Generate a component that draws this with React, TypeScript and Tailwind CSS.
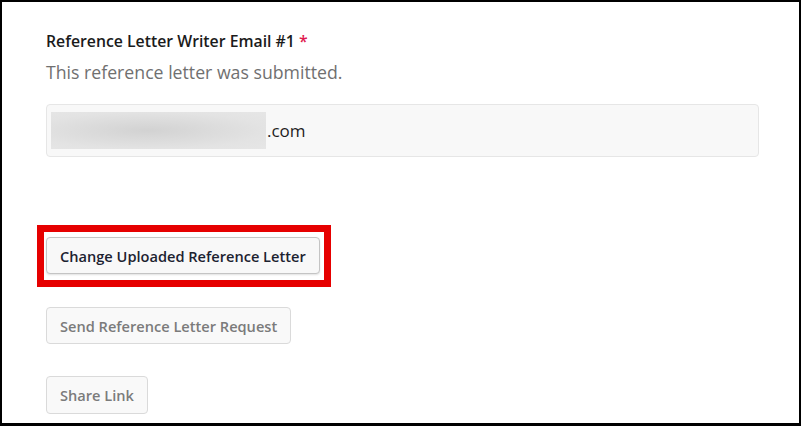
import React from "react";

export default function App() {
  return (
    <div className="w-[801px] h-[426px] box-border bg-white border-black border-t-2 border-l-2 border-r-2 border-b-[3px] pl-[44px] pt-[28px] font-['Open_Sans',sans-serif] overflow-hidden">
      <div className="text-[15.8px] leading-[22px] font-semibold text-[#1b1b1b]">
        Reference Letter Writer Email #1 <span className="text-[#e0194f]">*</span>
      </div>
      <div className="mt-[7px] text-[17.7px] leading-[26px] text-[#707070]">
        This reference letter was submitted.
      </div>
      <div className="mt-[19px] w-[713px] h-[53px] box-border rounded-[4px] border border-[#e6e6e6] bg-[#f8f8f8] flex items-center pl-[4px]">
        <div className="w-[215px] h-[37px] bg-[radial-gradient(ellipse_at_45%_50%,#d2d2d2,#e3e3e3_70%,#e6e6e6)]" />
        <span className="text-[17px] leading-[26px] text-[#1e1e1e] ml-px">.com</span>
      </div>
      <div className="mt-[80px] relative w-fit">
        <button className="box-border h-[37px] px-[13px] rounded-[4px] border border-[#c4c4c4] bg-[#f8f8f8] shadow-[0_1px_2px_rgba(0,0,0,0.12)] text-[14.6px] leading-[22px] font-semibold text-[#1c2230]">
          Change Uploaded Reference Letter
        </button>
        <div className="absolute -left-[9px] -top-[12px] w-[294px] h-[62px] border-[7px] border-[#e60000] pointer-events-none" />
      </div>
      <div className="mt-[33px]">
        <button className="box-border h-[37px] px-[13px] rounded-[4px] border border-[#dadada] bg-[#f9f9f9] text-[14.6px] leading-[22px] font-semibold text-[#7b7b7b]">
          Send Reference Letter Request
        </button>
      </div>
      <div className="mt-[32px]">
        <button className="box-border h-[38px] px-[13px] rounded-[4px] border border-[#dadada] bg-[#f9f9f9] text-[14.6px] leading-[22px] font-semibold text-[#7b7b7b]">
          Share Link
        </button>
      </div>
    </div>
  );
}
